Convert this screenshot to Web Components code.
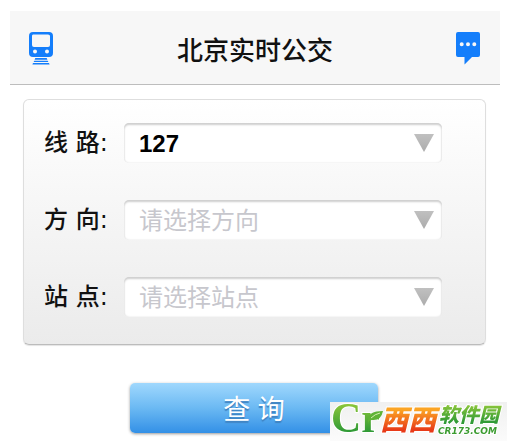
<!DOCTYPE html>
<html lang="zh-CN">
<head>
<meta charset="utf-8">
<meta name="viewport" content="width=device-width, initial-scale=1">
<title>北京实时公交</title>
<style>
	body {
		margin: 0;
		padding: 11px 7px 8px 10px;
		background: #fff;
		color: #111;
		font-family: "Liberation Sans", "Noto Sans CJK SC", sans-serif;
	}
</style>
</head>
<body>
<bus-header>
	<bus-icon slot="left" name="train" label="公交"></bus-icon>
	北京实时公交
	<bus-icon slot="right" name="chat" label="消息"></bus-icon>
</bus-header>
<bus-panel>
	<bus-select label="线 路:" value="127"></bus-select>
	<bus-select label="方 向:" placeholder="请选择方向"></bus-select>
	<bus-select label="站 点:" placeholder="请选择站点"></bus-select>
</bus-panel>
<bus-button>查 询</bus-button>
<site-mark></site-mark>

<script>
// header bar: icon, title, icon
class BusHeader extends HTMLElement {
	constructor() {
		super();
		this.attachShadow({mode: 'open'}).innerHTML = `
			<style>
				:host { display: block; }
				header {
					display: flex;
					align-items: center;
					justify-content: space-between;
					height: 71px;
					padding: 2px 18px 0;
					background: #f7f7f7;
					border-bottom: 1px solid #bdbdbd;
				}
				h1 {
					margin: 0;
					padding-top: 4px;
					font-size: 26px;
					line-height: 36px;
					font-weight: 500;
				}
			</style>
			<header>
				<slot name="left"></slot>
				<h1><slot></slot></h1>
				<slot name="right"></slot>
			</header>
		`;
	}
}

const icons = {
	train: `
		<path fill-rule="evenodd" d="M4 0H21Q25 0 25 4V21Q25 25 21 25H5Q1 25 1 21V4Q1 0 5 0ZM5 2.500Q4 2.500 4 4V13Q4 15 6 15H20Q22 15 22 13V4Q22 2.500 20 2.500ZM7 17.500A2 2 0 1 0 7 21.500A2 2 0 1 0 7 17.500ZM19 17.500A2 2 0 1 0 19 21.500A2 2 0 1 0 19 17.500Z"/>
		<path d="M7.300 26H18.700L19.400 27.800H6.600ZM6.300 28.700H19.700L20.400 30H5.600ZM5 31H21L21.600 32.500H4.400Z"/>`,
	chat: `
		<path fill-rule="evenodd" d="M2 0H22Q24 0 24 2V23Q24 25 22 25H16L8.500 32.500V25H2Q0 25 0 23V2Q0 0 2 0ZM5.700 10.300A2 2 0 1 0 5.700 14.300A2 2 0 1 0 5.700 10.300ZM12 10.300A2 2 0 1 0 12 14.300A2 2 0 1 0 12 10.300ZM18.300 10.300A2 2 0 1 0 18.300 14.300A2 2 0 1 0 18.300 10.300Z"/>`
};

class BusIcon extends HTMLElement {
	constructor() {
		super();
		this.attachShadow({mode: 'open'}).innerHTML = `
			<style>
				:host { display: block; }
				button {
					display: block;
					padding: 0;
					border: 0;
					background: none;
					cursor: pointer;
				}
				svg { display: block; fill: #147efb; }
			</style>
			<button type="button" aria-label="${this.getAttribute('label')}">
				<svg width="26" height="33" viewBox="0 0 26 33">${icons[this.getAttribute('name')]}</svg>
			</button>
		`;
	}
}

class BusPanel extends HTMLElement {
	constructor() {
		super();
		this.attachShadow({mode: 'open'}).innerHTML = `
			<style>
				:host {
					display: flex;
					flex-direction: column;
					gap: 37px;
					margin: 14px 14px 0 13px;
					padding: 23px 43px 27px 20px;
					border: 1px solid #dedede;
					border-bottom-color: #bcbcbc;
					border-radius: 6px;
					background: linear-gradient(#fff, #ebebeb);
					box-shadow: 0 1px 1px #e4e4e4;
				}
			</style>
			<slot></slot>
		`;
	}
}

class BusSelect extends HTMLElement {
	constructor() {
		super();
		const value = this.getAttribute('value');
		this.attachShadow({mode: 'open'}).innerHTML = `
			<style>
				:host {
					display: grid;
					grid-template-columns: 80px 1fr;
					align-items: center;
				}
				label {
					font-family: "DejaVu Sans", "Noto Sans CJK SC", sans-serif;
					font-size: 24px;
					line-height: 40px;
					font-weight: 500;
				}
				.field { display: grid; align-items: center; }
				select, svg { grid-area: 1 / 1; }
				select {
					appearance: none;
					width: 100%;
					height: 40px;
					margin: 0;
					padding: 0 40px 0 15px;
					border: 0;
					border-radius: 5px;
					background: #fff;
					box-shadow: inset 0 2px 2px #cfcfcf, inset 0 0 2px #ddd;
					font-family: inherit;
					font-size: 24px;
					font-weight: bold;
					color: #000;
				}
				select.empty { font-weight: 400; color: #c7c7cd; }
				svg {
					justify-self: end;
					margin-right: 8px;
					pointer-events: none;
				}
			</style>
			<label for="sel">${this.getAttribute('label')}</label>
			<div class="field">
				<select id="sel" class="${value ? '' : 'empty'}">
					<option>${value || this.getAttribute('placeholder')}</option>
				</select>
				<svg width="20" height="18" viewBox="0 0 20 18">
					<defs>
						<linearGradient id="g" x2="0" y2="1">
							<stop stop-color="#c0c0c0"/>
							<stop offset="1" stop-color="#acacac"/>
						</linearGradient>
					</defs>
					<path fill="url(#g)" d="M0 0H20L10 18Z"/>
				</svg>
			</div>
		`;
	}
}

class BusButton extends HTMLElement {
	constructor() {
		super();
		this.attachShadow({mode: 'open'}).innerHTML = `
			<style>
				:host {
					display: flex;
					justify-content: center;
					margin: 38px 2px 0 0;
				}
				button {
					width: 51%;
					height: 50px;
					padding: 0 0 2px;
					border: 0;
					border-radius: 5px;
					background: linear-gradient(#a0d8fd, #6bb9f3 50%, #3390e6);
					box-shadow: 0 1px 3px #999;
					color: #fff;
					font-family: inherit;
					font-size: 27px;
					text-shadow: 0 2px 1px #3f82c0;
					cursor: pointer;
				}
			</style>
			<button type="button"><slot></slot></button>
		`;
	}
}

// site badge, lies over the bottom right corner
class SiteMark extends HTMLElement {
	constructor() {
		super();
		this.attachShadow({mode: 'open'}).innerHTML = `
			<style>
				:host {
					position: fixed;
					right: 0;
					bottom: 0;
				}
				svg {
					display: block;
					overflow: visible;
					background: linear-gradient(#f0f0f0, #fbfbfb);
				}
				text { paint-order: stroke; stroke: #fff; stroke-width: 2px; }
				.big { font: italic 900 28px "Noto Sans CJK SC", sans-serif; fill: url(#orange); }
				.mid { font: italic 900 20px "Noto Sans CJK SC", sans-serif; fill: url(#green); }
				.small { font: italic bold 9px "DejaVu Sans", sans-serif; fill: #3a9b2f; }
				.logo { font: bold 42px "Liberation Serif", serif; fill: url(#green); }
			</style>
			<svg width="177" height="39" viewBox="0 0 177 39">
				<defs>
					<linearGradient id="green" x2="0" y2="1">
						<stop offset=".2" stop-color="#8cc63a"/>
						<stop offset=".8" stop-color="#2f9a36"/>
					</linearGradient>
					<linearGradient id="orange" x2="0" y2="1">
						<stop offset=".3" stop-color="#fba424"/>
						<stop offset=".8" stop-color="#e83a18"/>
					</linearGradient>
				</defs>
				<text class="logo" x="1" y="30">Cr</text>
				<path fill="#5fb336" d="M38 18Q38 9 53 9Q51 19 42 18Q38 18 38 23Z"/>
				<path fill="none" stroke="#d5edb0" d="M41 16Q45 12 50 11"/>
				<text class="big" x="50" y="28">西西</text>
				<text class="mid" x="109" y="20">软件园</text>
				<text class="small" x="108" y="32">CR173.COM</text>
			</svg>
		`;
	}
}

customElements.define('bus-header', BusHeader);
customElements.define('bus-icon', BusIcon);
customElements.define('bus-panel', BusPanel);
customElements.define('bus-select', BusSelect);
customElements.define('bus-button', BusButton);
customElements.define('site-mark', SiteMark);
</script>
</body>
</html>
